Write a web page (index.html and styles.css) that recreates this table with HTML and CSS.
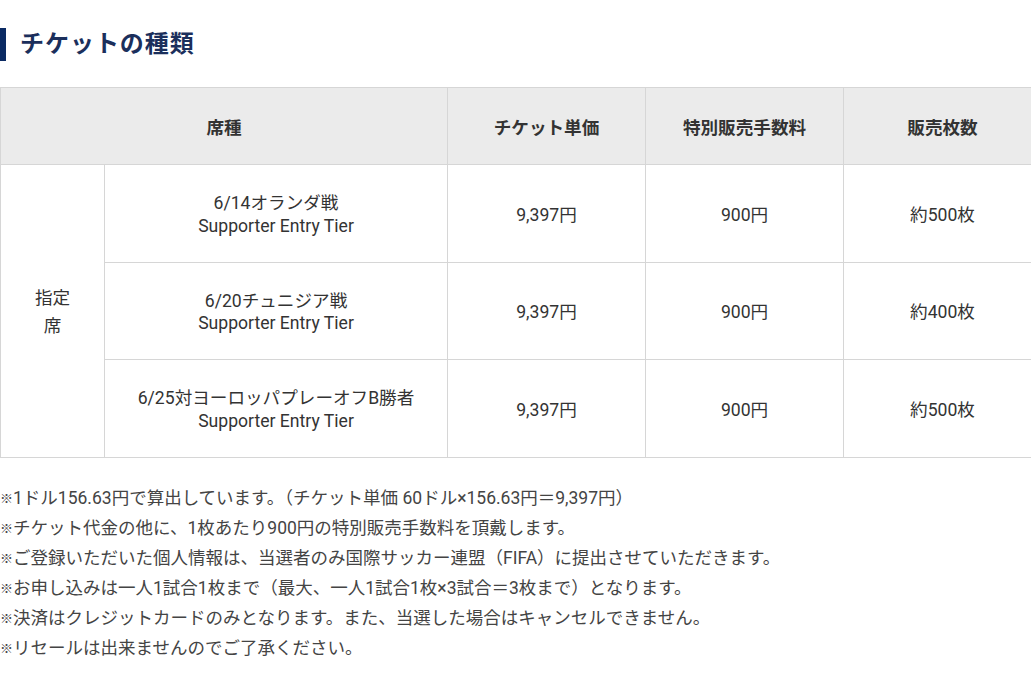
FILE: index.html
```html
<!DOCTYPE html>
<html lang="ja">
<head>
<meta charset="utf-8">
<title>チケットの種類</title>
<link rel="stylesheet" href="styles.css">
</head>
<body>
<section class="tickets">
  <h2 class="heading">チケットの種類</h2>
  <table class="ticket-table">
    <colgroup>
      <col class="c1"><col class="c2"><col class="c3"><col class="c4"><col class="c5">
    </colgroup>
    <thead>
      <tr>
        <th colspan="2">席種</th>
        <th>チケット単価</th>
        <th>特別販売手数料</th>
        <th>販売枚数</th>
      </tr>
    </thead>
    <tbody>
      <tr>
        <td rowspan="3" class="seat">指定<br>席</td>
        <td class="match">6/14オランダ戦<br>Supporter Entry Tier</td>
        <td>9,397円</td>
        <td>900円</td>
        <td>約500枚</td>
      </tr>
      <tr>
        <td class="match">6/20チュニジア戦<br>Supporter Entry Tier</td>
        <td>9,397円</td>
        <td>900円</td>
        <td>約400枚</td>
      </tr>
      <tr>
        <td class="match">6/25対ヨーロッパプレーオフB勝者<br>Supporter Entry Tier</td>
        <td>9,397円</td>
        <td>900円</td>
        <td>約500枚</td>
      </tr>
    </tbody>
  </table>
  <ul class="notes">
    <li><span class="mark">※</span>1ドル156.63円で算出しています。（チケット単価 60ドル×156.63円＝9,397円）</li>
    <li><span class="mark">※</span>チケット代金の他に、1枚あたり900円の特別販売手数料を頂戴します。</li>
    <li><span class="mark">※</span>ご登録いただいた個人情報は、当選者のみ国際サッカー連盟（FIFA）に提出させていただきます。</li>
    <li><span class="mark">※</span>お申し込みは一人1試合1枚まで（最大、一人1試合1枚×3試合＝3枚まで）となります。</li>
    <li><span class="mark">※</span>決済はクレジットカードのみとなります。また、当選した場合はキャンセルできません。</li>
    <li><span class="mark">※</span>リセールは出来ませんのでご了承ください。</li>
  </ul>
</section>
</body>
</html>
```

FILE: styles.css
```css
html, body {
  margin: 0;
  padding: 0;
  overflow: hidden;
  background: #fff;
}
body {
  font-family: Roboto, "Noto Sans CJK JP", sans-serif;
  color: #333;
  width: 1031px;
}
.tickets {
  padding-top: 28px;
}
.heading {
  margin: 0 0 26px 0;
  border-left: 6px solid #0b2a63;
  padding-left: 14px;
  font-size: 24px;
  line-height: 33px;
  font-weight: 700;
  color: #1b2f5c;
  letter-spacing: 0.04em;
}
.ticket-table {
  width: 1042px;
  border-collapse: collapse;
  table-layout: fixed;
  font-size: 17.6px;
  color: #333;
}
.c1 { width: 104px; }
.c2 { width: 343px; }
.c3, .c4, .c5 { width: 198px; }
.ticket-table th,
.ticket-table td {
  border: 1px solid #d6d6d6;
  text-align: center;
  vertical-align: middle;
  padding: 0 8px;
}
.ticket-table th {
  background: #ebebeb;
  font-weight: 700;
  height: 76px;
  color: #333;
}
.ticket-table td {
  height: 93.6px;
  padding-top: 3px;
  line-height: 22.5px;
}
.ticket-table td.seat {
  line-height: 28px;
}
.notes {
  list-style: none;
  margin: 25px 0 0 0;
  padding: 0;
  font-size: 17.5px;
  line-height: 30px;
  color: #444;
}
.notes li {
  height: 30px;
}
.mark {
  font-size: 13px;
  line-height: 0;
  vertical-align: 1px;
}
```
